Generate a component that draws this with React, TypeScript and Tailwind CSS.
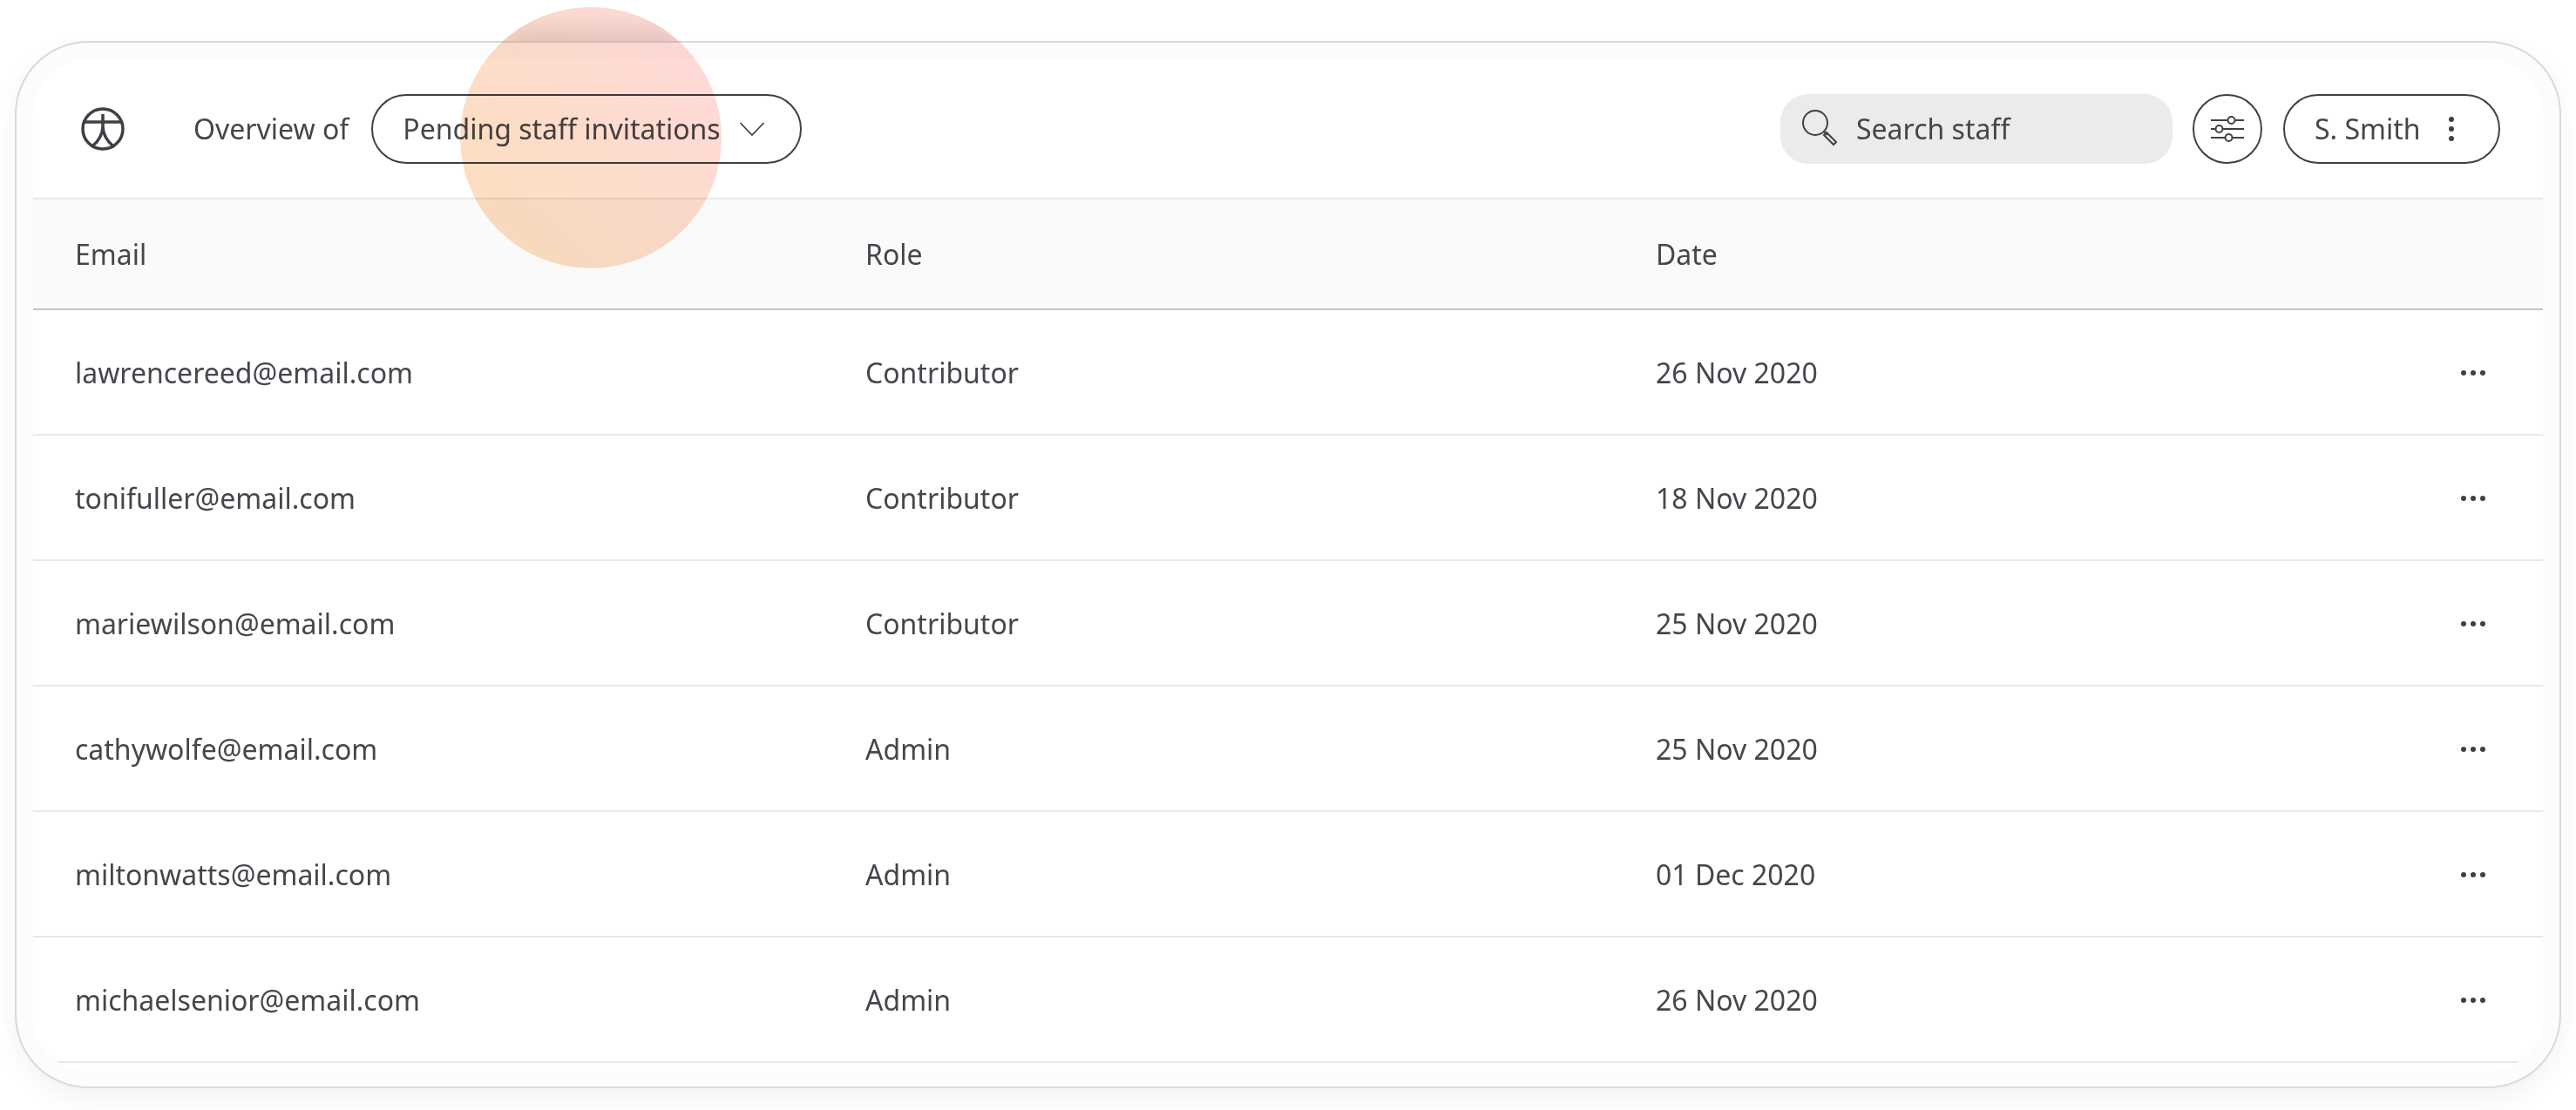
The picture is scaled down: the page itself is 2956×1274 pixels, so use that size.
const rows = [
  ["lawrencereed@email.com", "Contributor", "26 Nov 2020"],
  ["tonifuller@email.com", "Contributor", "18 Nov 2020"],
  ["mariewilson@email.com", "Contributor", "25 Nov 2020"],
  ["cathywolfe@email.com", "Admin", "25 Nov 2020"],
  ["miltonwatts@email.com", "Admin", "01 Dec 2020"],
  ["michaelsenior@email.com", "Admin", "26 Nov 2020"],
];

function Logo() {
  return (
    <svg width="52" height="52" viewBox="0 0 52 52" fill="none" stroke="#3f4046" strokeWidth="3.5">
      <circle cx="26" cy="26" r="23" />
      <path d="M3 18h46" strokeWidth="3.5" />
      <path d="M26 9v14c0 10-6 18-13 24M26 23c0 10 6 18 13 24" />
    </svg>
  );
}

function Chevron() {
  return (
    <svg width="30" height="18" viewBox="0 0 30 18" fill="none" stroke="#3f4046" strokeWidth="1.75">
      <path d="M1.5 2 15 16 28.5 2" />
    </svg>
  );
}

function SearchIcon() {
  return (
    <svg width="44" height="44" viewBox="0 0 44 44" fill="none" stroke="#3f4046" strokeWidth="2">
      <circle cx="16" cy="15" r="14" />
      <path d="M26 25 30 29M29 26 40 37 37 40 26 29Z" />
    </svg>
  );
}

function FilterIcon() {
  return (
    <svg width="40" height="30" viewBox="0 0 40 30" fill="none" stroke="#3f4046" strokeWidth="2">
      <path d="M1 5h19M29 5h10M1 15h5M15 15h24M1 25h16M26 25h13" />
      <circle cx="24.5" cy="5" r="4" />
      <circle cx="10.5" cy="15" r="4" />
      <circle cx="21.5" cy="25" r="4" />
    </svg>
  );
}

function Kebab() {
  return (
    <svg width="8" height="32" viewBox="0 0 8 32" fill="#3f4046">
      <circle cx="4" cy="5" r="3" />
      <circle cx="4" cy="16" r="3" />
      <circle cx="4" cy="27" r="3" />
    </svg>
  );
}

function Dots() {
  return (
    <svg width="30" height="8" viewBox="0 0 30 8" fill="#3f4046">
      <circle cx="4" cy="4" r="3" />
      <circle cx="15" cy="4" r="3" />
      <circle cx="26" cy="4" r="3" />
    </svg>
  );
}

export default function App() {
  return (
    <div className="relative w-[2956px] h-[1274px] bg-white overflow-hidden font-['Noto_Sans',sans-serif] text-[32px] leading-[44px] text-[#45464c]">
      <div className="absolute left-[17px] top-[47px] w-[2922px] h-[1202px] rounded-[84px] border-2 border-[#d9d9d9] bg-[#fcfcfc] shadow-[0_12px_30px_rgba(0,0,0,0.05)] px-[19px] pt-[18px]">
        <div className="h-[1163px] rounded-[64px] bg-white overflow-hidden">
          <div className="h-[160px] flex items-center pl-[54px] pr-[49px] pt-[2px]">
            <Logo />
            <span className="ml-[78px]">Overview of</span>
            <div className="ml-[26px] h-[80px] w-[494px] rounded-full border-2 border-[#3f4046] flex items-center justify-between pl-[34px] pr-[40px]">
              <span>Pending staff invitations</span>
              <Chevron />
            </div>
            <div className="ml-auto h-[80px] w-[450px] rounded-[32px] bg-[#ebebeb] flex items-center pl-[24px]">
              <SearchIcon />
              <span className="ml-[19px]">Search staff</span>
            </div>
            <div className="ml-[23px] w-[80px] h-[80px] rounded-full border-2 border-[#3f4046] flex items-center justify-center">
              <FilterIcon />
            </div>
            <div className="ml-[24px] h-[80px] w-[249px] rounded-full border-2 border-[#3f4046] flex items-center pl-[34px] pr-[50px] justify-between">
              <span>S. Smith</span>
              <Kebab />
            </div>
          </div>
          <div className="h-[129px] border-t-2 border-b-2 border-t-[#e8e8e8] border-b-[#c3c3c8] bg-[#fafafa] grid grid-cols-[907px_907px_1fr] items-center pl-[48px]">
            <span>Email</span>
            <span>Role</span>
            <span>Date</span>
          </div>
          {rows.map((r) => (
            <div key={r[0]} className="h-[144px] border-b-2 border-[#e8e8e8] grid grid-cols-[907px_907px_1fr_auto] items-center pl-[48px] pr-[65px] pt-[2px]">
              <span>{r[0]}</span>
              <span>{r[1]}</span>
              <span>{r[2]}</span>
              <Dots />
            </div>
          ))}
        </div>
      </div>
      <div className="absolute left-[528px] top-[8px] w-[300px] h-[300px] rounded-full overflow-hidden mix-blend-multiply bg-gradient-to-tr from-[#fcdfbb] to-[#ffd9dc]">
        <div className="absolute left-0 top-0 w-full h-[39px] overflow-hidden">
          <div className="absolute left-[50px] top-[24px] w-[200px] h-[36px] rounded-full bg-[#000000]/10 blur-[12px]" />
        </div>
      </div>
    </div>
  );
}
